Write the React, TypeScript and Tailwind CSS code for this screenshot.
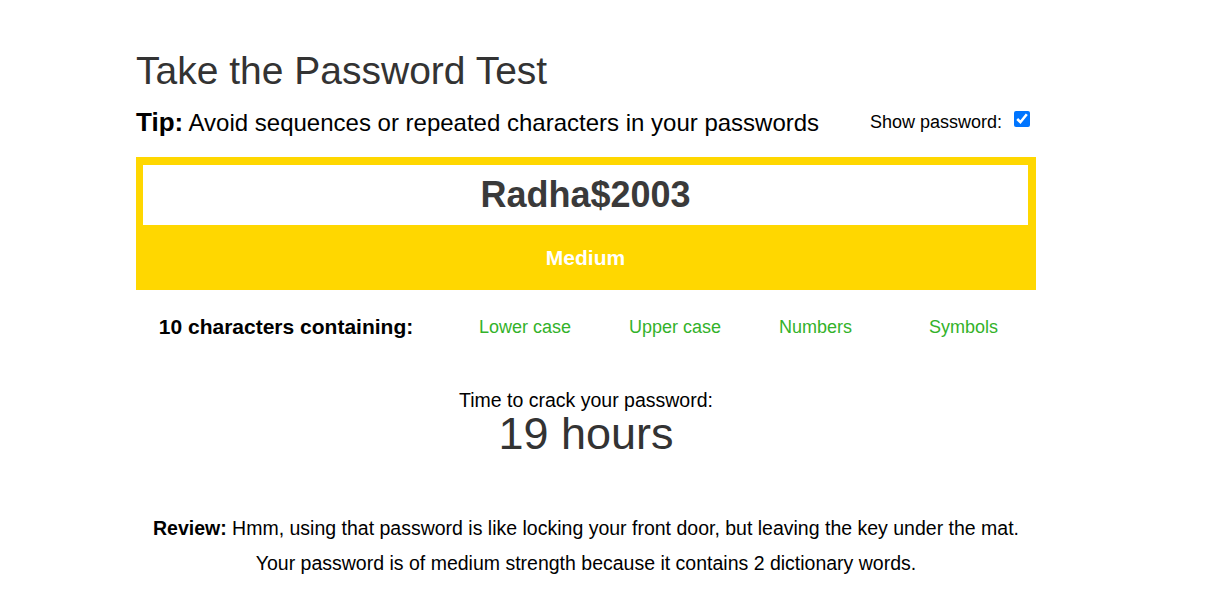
export default function App() {
  const checks = ['Lower case', 'Upper case', 'Numbers', 'Symbols'];

  return (
    <div className="min-h-screen bg-white font-['Liberation_Sans',Arial,sans-serif] text-black">
      <div className="ml-[136px] w-[900px] pt-[48px]">
        <h1 className="text-[39px] leading-[46px] text-[#333]">Take the Password Test</h1>

        <div className="mt-[12px] flex items-center justify-between">
          <p className="text-[24px] leading-[32px]">
            <span className="text-[26px] font-bold">Tip:</span> Avoid sequences or repeated characters in your passwords
          </p>
          <label className="mr-[6px] flex items-center gap-[12px] text-[18px]">
            Show password:
            <input type="checkbox" checked readOnly className="mb-[8px] h-[16px] w-[16px] accent-[#0075ff]" />
          </label>
        </div>

        <div className="mt-[18px] bg-[#ffd700] px-[7px] pt-[8px] pr-[8px]">
          <div className="flex h-[60px] items-center justify-center bg-white text-[36px] font-bold text-[#3a3a3a]">
            Radha$2003
          </div>
          <div className="flex h-[65px] items-center justify-center text-[21px] font-bold text-white">Medium</div>
        </div>

        <div className="mt-[21px] flex items-center">
          <div className="w-[300px] text-center text-[21px] font-bold">10 characters containing:</div>
          {checks.map((c) => (
            <div key={c} className="w-[150px] pl-[43px] pt-[2px] text-[18px] text-[#33b22a]">
              {c}
            </div>
          ))}
        </div>

        <div className="mt-[47px] text-center">
          <p className="text-[19.5px] leading-[20px]">Time to crack your password:</p>
          <p className="text-[45px] leading-[48px] text-[#333]">19 hours</p>
        </div>

        <div className="mt-[53px] text-center text-[19.5px] leading-[35px]">
          <p>
            <span className="font-bold">Review:</span> Hmm, using that password is like locking your front door, but leaving the key under the mat.
          </p>
          <p>Your password is of medium strength because it contains 2 dictionary words.</p>
        </div>
      </div>
    </div>
  );
}
